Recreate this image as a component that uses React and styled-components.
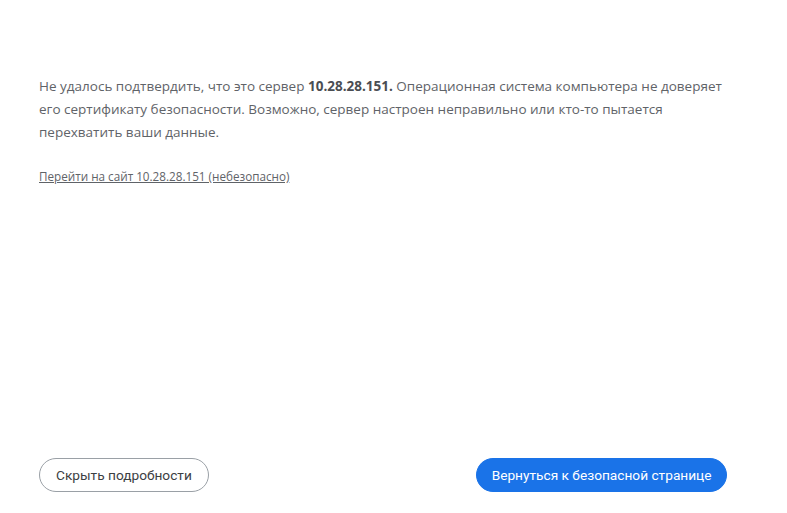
import styled, { createGlobalStyle } from 'styled-components';

const GlobalStyle = createGlobalStyle`
  html, body {
    margin: 0;
    padding: 0;
    background: #fff;
  }
`;

const Page = styled.div`
  box-sizing: border-box;
  min-height: 100vh;
  display: flex;
  flex-direction: column;
  justify-content: space-between;
  padding: 75px 39px 21px;
  font-family: "Open Sans", "Noto Sans", sans-serif;
  color: #5f6368;
`;

const Details = styled.div`
  display: flex;
  flex-direction: column;
  gap: 20px;
`;

const Text = styled.p`
  margin: 0;
  font-size: 13.5px;
  line-height: 23px;
  max-width: 700px;

  strong {
    color: #4a4d52;
    font-weight: 700;
  }
`;

const Link = styled.a`
  font-size: 11.7px;
  color: #5f6368;
  text-decoration: underline;
  cursor: pointer;
`;

const Nav = styled.div`
  display: flex;
  justify-content: space-between;
  align-items: center;
  padding-right: 21px;
`;

const Button = styled.button`
  height: 34px;
  padding: 0 ${p => (p.$primary ? '14.5px' : '16px')};
  border-radius: 17px;
  font-family: "Roboto", "Liberation Sans", sans-serif;
  font-size: 13.7px;
  cursor: pointer;
  border: 1px solid ${p => (p.$primary ? '#1a73e8' : '#9aa0a6')};
  background: ${p => (p.$primary ? '#1a73e8' : '#fff')};
  color: ${p => (p.$primary ? '#fff' : '#3c4043')};
`;

export default function App() {
  return (
    <>
      <GlobalStyle />
      <Page>
        <Details>
          <Text>
            Не удалось подтвердить, что это сервер <strong>10.28.28.151.</strong> Операционная система компьютера не доверяет его сертификату безопасности. Возможно, сервер настроен неправильно или кто-то пытается перехватить ваши данные.
          </Text>
          <div>
            <Link>Перейти на сайт 10.28.28.151 (небезопасно)</Link>
          </div>
        </Details>
        <Nav>
          <Button>Скрыть подробности</Button>
          <Button $primary>Вернуться к безопасной странице</Button>
        </Nav>
      </Page>
    </>
  );
}
